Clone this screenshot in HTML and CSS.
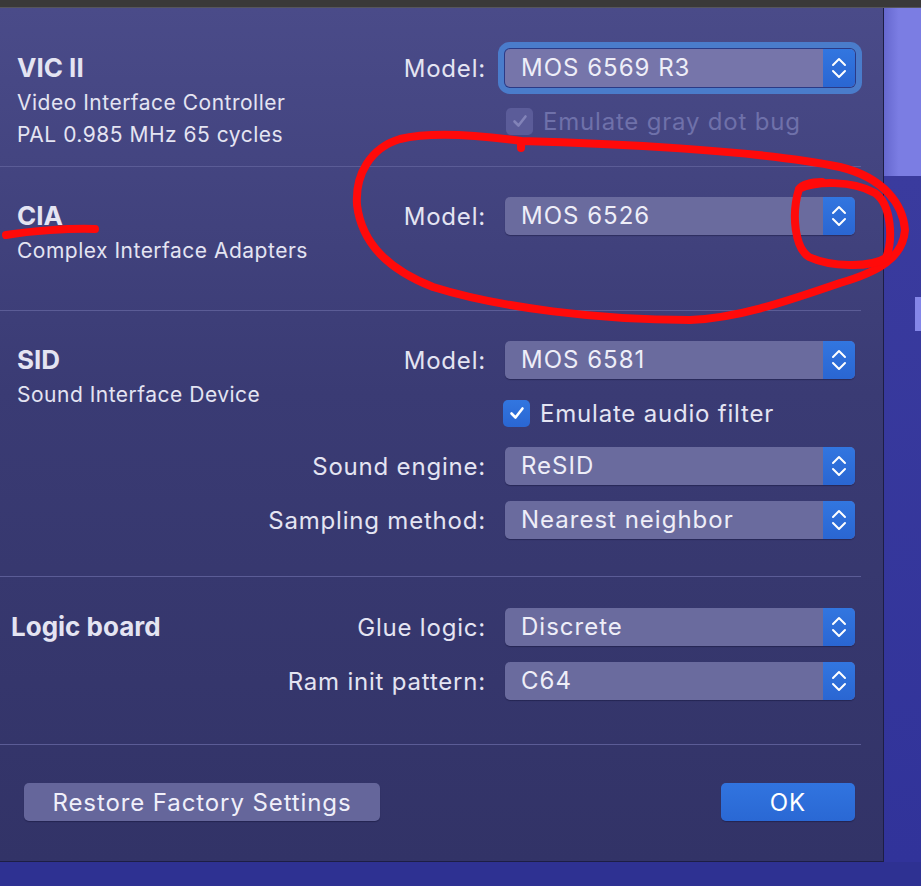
FILE: index.html
```html
<!DOCTYPE html>
<html lang="en">
<head>
    <meta charset="UTF-8">
    <title>Hardware</title>
    <link rel="stylesheet" href="styles.css">
</head>
<body>
    <div class="titlebar"></div>

    <div class="screen">
        <div class="sheet">

            <section class="group group-vic">
                <div class="group-info">
                    <h2 class="group-title">VIC II</h2>
                    <p class="group-sub">Video Interface Controller</p>
                    <p class="group-sub">PAL 0.985 MHz 65 cycles</p>
                </div>
                <div class="fields">
                    <label class="field-label">Model:</label>
                    <div class="popup popup-focus">
                        <span class="popup-value">MOS 6569 R3</span>
                        <span class="stepper"><svg width="16" height="26" viewBox="0 0 16 26"><path d="M2 10 L8 4 L14 10 M2 16 L8 22 L14 16"/></svg></span>
                    </div>
                    <span></span>
                    <div class="check check-disabled">
                        <span class="check-box"><svg width="18" height="18" viewBox="0 0 18 18"><path d="M3.5 9.5 L7.5 13.5 L14.5 4.5"/></svg></span>
                        <span class="check-text">Emulate gray dot bug</span>
                    </div>
                </div>
            </section>

            <section class="group group-cia">
                <div class="group-info">
                    <h2 class="group-title">CIA</h2>
                    <p class="group-sub">Complex Interface Adapters</p>
                </div>
                <div class="fields">
                    <label class="field-label">Model:</label>
                    <div class="popup">
                        <span class="popup-value">MOS 6526</span>
                        <span class="stepper"><svg width="16" height="26" viewBox="0 0 16 26"><path d="M2 10 L8 4 L14 10 M2 16 L8 22 L14 16"/></svg></span>
                    </div>
                </div>
            </section>

            <section class="group group-sid">
                <div class="group-info">
                    <h2 class="group-title">SID</h2>
                    <p class="group-sub">Sound Interface Device</p>
                </div>
                <div class="fields">
                    <label class="field-label">Model:</label>
                    <div class="popup">
                        <span class="popup-value">MOS 6581</span>
                        <span class="stepper"><svg width="16" height="26" viewBox="0 0 16 26"><path d="M2 10 L8 4 L14 10 M2 16 L8 22 L14 16"/></svg></span>
                    </div>
                    <span></span>
                    <div class="check">
                        <span class="check-box"><svg width="18" height="18" viewBox="0 0 18 18"><path d="M3.5 9.5 L7.5 13.5 L14.5 4.5"/></svg></span>
                        <span class="check-text">Emulate audio filter</span>
                    </div>
                    <label class="field-label">Sound engine:</label>
                    <div class="popup">
                        <span class="popup-value">ReSID</span>
                        <span class="stepper"><svg width="16" height="26" viewBox="0 0 16 26"><path d="M2 10 L8 4 L14 10 M2 16 L8 22 L14 16"/></svg></span>
                    </div>
                    <label class="field-label">Sampling method:</label>
                    <div class="popup">
                        <span class="popup-value">Nearest neighbor</span>
                        <span class="stepper"><svg width="16" height="26" viewBox="0 0 16 26"><path d="M2 10 L8 4 L14 10 M2 16 L8 22 L14 16"/></svg></span>
                    </div>
                </div>
            </section>

            <section class="group group-board">
                <div class="group-info">
                    <h2 class="group-title">Logic board</h2>
                </div>
                <div class="fields">
                    <label class="field-label">Glue logic:</label>
                    <div class="popup">
                        <span class="popup-value">Discrete</span>
                        <span class="stepper"><svg width="16" height="26" viewBox="0 0 16 26"><path d="M2 10 L8 4 L14 10 M2 16 L8 22 L14 16"/></svg></span>
                    </div>
                    <label class="field-label">Ram init pattern:</label>
                    <div class="popup">
                        <span class="popup-value">C64</span>
                        <span class="stepper"><svg width="16" height="26" viewBox="0 0 16 26"><path d="M2 10 L8 4 L14 10 M2 16 L8 22 L14 16"/></svg></span>
                    </div>
                </div>
            </section>

            <footer class="sheet-footer">
                <button class="btn btn-restore">Restore Factory Settings</button>
                <button class="btn btn-ok">OK</button>
            </footer>
        </div>

        <div class="side">
            <div class="side-top"></div>
            <div class="side-bottom"><span class="side-tab"></span></div>
        </div>
    </div>

    <!-- marker scribbles on top of the sheet -->
    <svg class="marks" width="921" height="886" viewBox="0 0 921 886">
        <path d="M6 235 C30 231, 70 228, 95 229"/>
        <path d="M521 148 L521 141 C600 143, 760 150, 840 167 C885 178, 903 205, 905 230 C903 258, 878 272, 840 283 C790 300, 740 318, 690 320 C600 320, 500 308, 433 287 C390 270, 362 245, 357 205 C355 175, 370 148, 400 139 C430 132, 470 134, 521 141"/>
        <path d="M799 189 C815 181, 852 180, 875 193 C892 205, 893 240, 886 258 C870 268, 830 267, 809 257 C795 248, 791 215, 799 189 C803 184, 812 182, 822 182"/>
    </svg>
</body>
</html>
```

FILE: styles.css
```css
/* Reset */
* {
    margin: 0;
    padding: 0;
    box-sizing: border-box;
}

body {
    width: 921px;
    height: 886px;
    overflow: hidden;
    position: relative;
    background: #2e3192;
    font-family: Inter, "Noto Sans", sans-serif;
    color: #e4e4f2;
}

.titlebar {
    height: 8px;
    background: #3a3939;
    border-bottom: 1px solid #56555c;
}

.screen {
    display: flex;
    height: 854px;
}

/* the preferences sheet */
.sheet {
    width: 884px;
    padding-right: 22px;
    background: linear-gradient(#4a4b89, #3a3b74 45%, #323367);
    border-right: 1px solid #1d1e44;
    border-bottom: 1px solid #1d1e44;
}

.side {
    flex: 1;
    display: flex;
    flex-direction: column;
}

.side-top {
    height: 168px;
    background: linear-gradient(to right, #6668cf, #7b7de3 40%);
}

.side-bottom {
    flex: 1;
    display: flex;
    justify-content: flex-end;
    padding-top: 121px;
    background: linear-gradient(#3a3b9e, #31339a);
}

.side-tab {
    width: 6px;
    height: 34px;
    background: #8486e8;
}

/* sections */
.group {
    display: flex;
    align-items: flex-start;
    padding: 30px 6px 37px 17px;
    border-bottom: 1px solid #5b5c96;
}

.group-vic {
    padding-top: 41px;
    padding-bottom: 15px;
}

.group-cia {
    padding-bottom: 43px;
}

.group-board {
    padding-top: 31px;
    padding-bottom: 44px;
    padding-left: 11px;
}

.group-info {
    flex: 1;
}

.group-title {
    font-size: 26px;
    font-weight: 700;
    line-height: 38px;
}

.group-sub {
    font-size: 21px;
    letter-spacing: 0.5px;
    line-height: 32px;
}

.fields {
    display: grid;
    grid-template-columns: auto 350px;
    align-content: start;
    align-items: center;
    column-gap: 19px;
    row-gap: 16px;
}

.field-label {
    text-align: right;
    font-size: 24px;
    letter-spacing: 0.8px;
}

/* popup buttons */
.popup {
    display: flex;
    height: 38px;
    border-radius: 5px;
    background: #6a6b9e;
    box-shadow: 0 1px 1px rgba(10, 10, 40, 0.35);
    overflow: hidden;
}

.popup-focus {
    background: #7675aa;
    overflow: visible;
    box-shadow: 0 0 0 1px #2b3a86, 0 0 0 7px #4a7ccb;
}

.popup-focus .stepper {
    border-radius: 0 5px 5px 0;
}

.popup-value {
    flex: 1;
    padding-left: 16px;
    font-size: 24px;
    letter-spacing: 1px;
    line-height: 38px;
    color: #eeeef8;
}

.stepper {
    width: 32px;
    display: flex;
    align-items: center;
    justify-content: center;
    background: linear-gradient(#3276e0, #2a66d2);
}

.stepper path {
    fill: none;
    stroke: #fff;
    stroke-width: 2;
    stroke-linecap: round;
    stroke-linejoin: round;
}

/* checkboxes */
.check {
    display: flex;
    align-items: center;
    gap: 10px;
    height: 36px;
}

.check-box {
    width: 27px;
    height: 27px;
    border-radius: 5px;
    display: flex;
    align-items: center;
    justify-content: center;
    background: linear-gradient(#3276e0, #2a66d2);
    margin-left: -2px;
}

.check-box path {
    fill: none;
    stroke: #fff;
    stroke-width: 2.6;
    stroke-linecap: round;
    stroke-linejoin: round;
}

.check-text {
    font-size: 24px;
    letter-spacing: 0.8px;
}

.check-disabled .check-box {
    background: #5b5c99;
    margin-left: 1px;
}

.check-disabled .check-box path {
    stroke: #8283b8;
}

.check-disabled .check-text {
    color: #6f71aa;
}

/* bottom buttons */
.sheet-footer {
    display: flex;
    justify-content: space-between;
    padding: 38px 6px 40px 24px;
}

.btn {
    height: 38px;
    border: none;
    border-radius: 5px;
    font-family: Inter, "Noto Sans", sans-serif;
    font-size: 24px;
    letter-spacing: 0.9px;
    color: #f0f0fa;
    box-shadow: 0 1px 1px rgba(10, 10, 40, 0.35);
}

.btn-restore {
    width: 356px;
    background: #65669b;
}

.btn-ok {
    width: 134px;
    background: linear-gradient(#3174df, #2a68d4);
    color: #fff;
}

/* red marker overlay */
.marks {
    position: absolute;
    top: 0;
    left: 0;
    pointer-events: none;
}

.marks path {
    fill: none;
    stroke: #ff0a0a;
    stroke-width: 8;
    stroke-linecap: round;
    stroke-linejoin: round;
}
```
